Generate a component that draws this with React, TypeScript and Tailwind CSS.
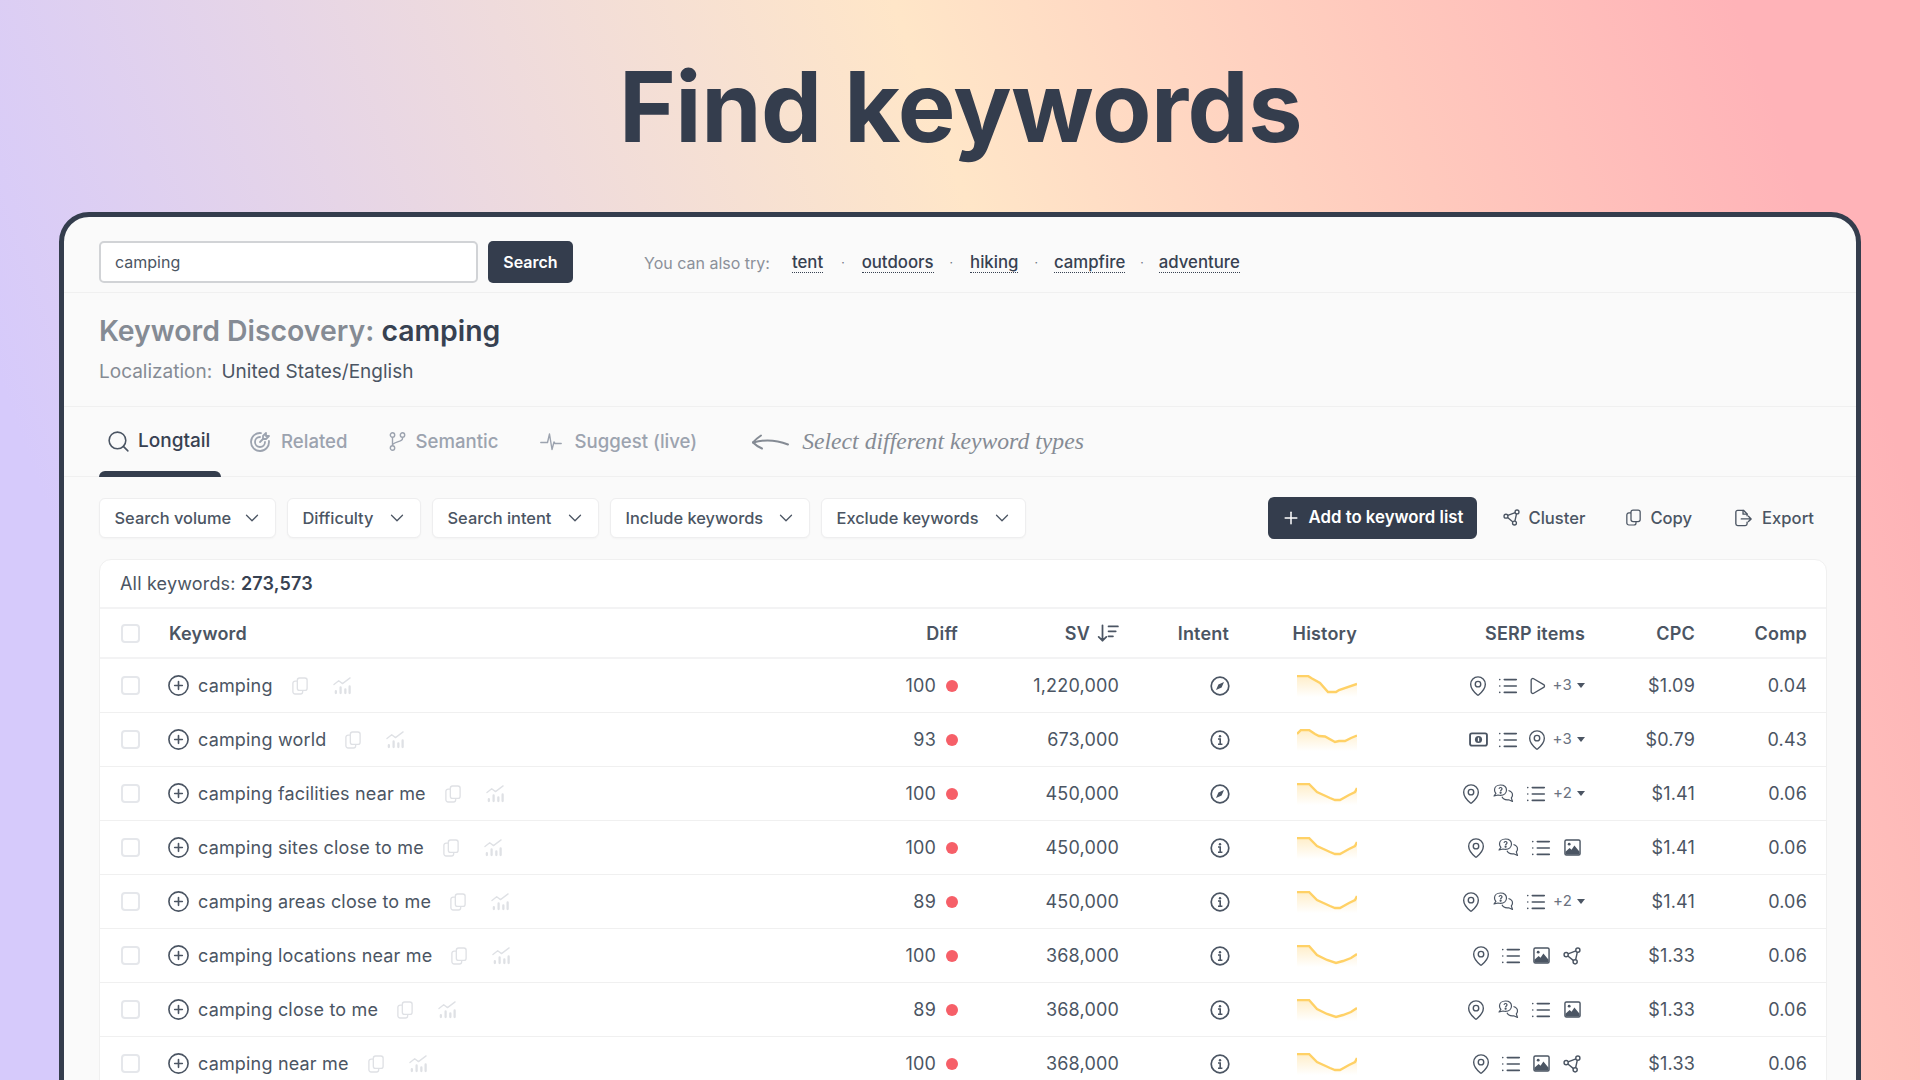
import React from 'react';
import { ChevronDown, CirclePlus, List, MapPin, Play, Plus, Search } from 'lucide-react';

type Serp = 'pin' | 'list' | 'play' | 'cash' | 'ask' | 'image' | 'share';

interface Row {
  keyword: string;
  diff: number;
  sv: string;
  intent: 'nav' | 'info';
  line: string;
  serp: Serp[];
  more?: string;
  cpc: string;
  comp: string;
}

const curve = '0,1 12,1 20,9 33,15 38,17 43,17 52,12 58,9 60,5';

const rows: Row[] = [
  { keyword: 'camping', diff: 100, sv: '1,220,000', intent: 'nav', line: '0,1 11,1 15,3.5 23,8 31,17 39,17 42,15 60,9', serp: ['pin', 'list', 'play'], more: '+3', cpc: '$1.09', comp: '0.04' },
  { keyword: 'camping world', diff: 93, sv: '673,000', intent: 'info', line: '0,5 4,1 12,1 18,5 22,7 28,7.5 38,13 42,12 48,12 54,9 60,6.5', serp: ['cash', 'list', 'pin'], more: '+3', cpc: '$0.79', comp: '0.43' },
  { keyword: 'camping facilities near me', diff: 100, sv: '450,000', intent: 'nav', line: curve, serp: ['pin', 'ask', 'list'], more: '+2', cpc: '$1.41', comp: '0.06' },
  { keyword: 'camping sites close to me', diff: 100, sv: '450,000', intent: 'info', line: curve, serp: ['pin', 'ask', 'list', 'image'], cpc: '$1.41', comp: '0.06' },
  { keyword: 'camping areas close to me', diff: 89, sv: '450,000', intent: 'info', line: curve, serp: ['pin', 'ask', 'list'], more: '+2', cpc: '$1.41', comp: '0.06' },
  { keyword: 'camping locations near me', diff: 100, sv: '368,000', intent: 'info', line: '0,1 12,1 20,10 30,15 39,18 46,16 54,13 60,9', serp: ['pin', 'list', 'image', 'share'], cpc: '$1.33', comp: '0.06' },
  { keyword: 'camping close to me', diff: 89, sv: '368,000', intent: 'info', line: '0,1 12,1 20,10 30,15 39,18 46,16 54,13 60,9', serp: ['pin', 'ask', 'list', 'image'], cpc: '$1.33', comp: '0.06' },
  { keyword: 'camping near me', diff: 100, sv: '368,000', intent: 'info', line: curve, serp: ['pin', 'list', 'image', 'share'], cpc: '$1.33', comp: '0.06' },
];

const gridCols = 'grid grid-cols-[69px_689px_100px_161px_110px_128px_228px_110px_112px] pr-[19px] items-center';

const CopyIcon = ({ className }: { className?: string }) => (
  <svg viewBox="0 0 18 20" fill="none" stroke="currentColor" strokeWidth="1.5" className={className}>
    <rect x="6" y="1" width="11" height="14" rx="2.5" />
    <path d="M6 4.5H3.5A2.5 2.5 0 0 0 1 7v9.5A2.5 2.5 0 0 0 3.5 19h6a2.5 2.5 0 0 0 2.5-2.5V15" />
  </svg>
);

const ShareIcon = ({ className }: { className?: string }) => (
  <svg viewBox="0 0 20 20" fill="none" stroke="currentColor" strokeWidth="1.6" className={className}>
    <circle cx="3.5" cy="8.5" r="2.3" />
    <circle cx="16.5" cy="3.5" r="2.3" />
    <circle cx="13.5" cy="16.5" r="2.3" />
    <path d="M5.7 7.6l8.6-3.3M5.4 10l6.3 5.2M15.9 5.7l-1.9 8.6" />
  </svg>
);

const ExportIcon = ({ className }: { className?: string }) => (
  <svg viewBox="0 0 20 20" fill="none" stroke="currentColor" strokeWidth="1.5" strokeLinecap="round" strokeLinejoin="round" className={className}>
    <path d="M14 7.5V5.5L10 1.5H3.5A2 2 0 0 0 1.5 3.5v13a2 2 0 0 0 2 2H12a2 2 0 0 0 2-2V14.5" />
    <path d="M9.5 1.5v4.2h4.5" />
    <path d="M7.5 11h11M15.5 8l3 3-3 3" />
  </svg>
);

const RelatedIcon = () => (
  <svg viewBox="0 0 24 24" fill="none" stroke="currentColor" strokeWidth="1.8" strokeLinecap="round" strokeLinejoin="round" className="w-[24px] h-[24px] -ml-[3px]">
    <path d="M12 7a5 5 0 1 0 5 5" />
    <path d="M13 3.055a9 9 0 1 0 7.941 7.945" />
    <path d="M15 6v3h3l3-3h-3v-3z" />
    <path d="M15 9l-3 3" />
  </svg>
);

const BranchIcon = () => (
  <svg viewBox="0 0 17 19" fill="none" stroke="currentColor" strokeWidth="1.4" className="w-[17px] h-[19px]">
    <circle cx="3.5" cy="3" r="2.2" />
    <circle cx="3.5" cy="16" r="2.2" />
    <circle cx="13.5" cy="3" r="2.2" />
    <path d="M3.500 5.200v8.600M13.500 5.200v1.300c0 3.500-6.500 2.500-10 6" />
  </svg>
);

const PulseIcon = () => (
  <svg viewBox="0 0 22 20" fill="none" stroke="currentColor" strokeWidth="1.4" strokeLinejoin="round" strokeLinecap="round" className="w-[22px] h-[20px]">
    <path d="M0.8 10.5H7.5L9.5 2 12 17.5l2-7.5 1 1.5H21.2" />
  </svg>
);

const HandArrow = () => (
  <svg viewBox="0 0 38 16" fill="none" stroke="currentColor" strokeWidth="2" strokeLinecap="round" strokeLinejoin="round" className="w-[38px] h-[16px]">
    <path d="M37 10.5C27 6.5 14 5 2 8.5" />
    <path d="M10 1.5C7 3.5 4.5 5.5 2 8.5 4.5 11 7.5 13 11 14.5" />
  </svg>
);

const TrendIcon = () => (
  <svg viewBox="0 0 20 20" fill="none" stroke="currentColor" strokeWidth="1.4" strokeLinecap="round" strokeLinejoin="round" className="w-[19px] h-[19px] text-[#dfe1e5]">
    <path d="M1 9l5-4 4 3 8-6" />
    <path strokeWidth="2.4" d="M3 16v2M8 12v6M13 14v4M17.5 11v7" />
  </svg>
);

const CompassIcon = () => (
  <svg viewBox="0 0 20 20" fill="none" className="w-[20px] h-[20px] text-[#4b5563]">
    <circle cx="10" cy="10" r="8.8" stroke="currentColor" strokeWidth="1.7" />
    <path d="M14 6l-2.4 5.6L6 14l2.4-5.6z" fill="currentColor" />
  </svg>
);

const InfoIcon = () => (
  <svg viewBox="0 0 20 20" fill="none" className="w-[20px] h-[20px] text-[#4b5563]">
    <circle cx="10" cy="10" r="8.8" stroke="currentColor" strokeWidth="1.7" />
    <circle cx="10" cy="6.2" r="1.2" fill="currentColor" />
    <path d="M8 9h2.2v5M8 14.2h4.4" stroke="currentColor" strokeWidth="1.6" />
  </svg>
);

const AskIcon = () => (
  <svg viewBox="0 0 21 19" fill="none" stroke="currentColor" strokeWidth="1.2" strokeLinejoin="round" className="w-[21px] h-[19px]">
    <path d="M7.5 1C4 1 1.5 3.2 1.5 6c0 1.3.5 2.4 1.4 3.3L1 12l4-1c.8.3 1.6.4 2.5.4 3.500 0 6-2.300 6-5.400S11 1 7.500 1z" />
    <path d="M15.500 6.500c2.300.7 4 2.400 4 4.500 0 1.100-.5 2.100-1.200 2.900l1.200 3.600-3.800-1.700c-2.900.4-5.700-.8-6.700-3" />
    <path d="M6 4.800c.2-.9.900-1.400 1.700-1.300.9.100 1.400.800 1.300 1.500-.1.900-1.300 1.100-1.400 2.100" />
    <circle cx="7.600" cy="8.700" r=".5" fill="currentColor" />
  </svg>
);

const CashIcon = () => (
  <svg viewBox="0 0 20 16" className="w-[19px] h-[15px] shrink-0">
    <rect x="1" y="1.500" width="18" height="13" rx="2" fill="none" stroke="currentColor" strokeWidth="2" />
    <circle cx="10" cy="8" r="3.800" fill="currentColor" />
    <rect x="9.300" y="6" width="1.400" height="4" fill="#fff" />
  </svg>
);

const ImageIcon = () => (
  <svg viewBox="0 0 18 18" className="w-[17px] h-[17px]">
    <rect x="1" y="1" width="16" height="16" rx="1.500" fill="none" stroke="currentColor" strokeWidth="1.500" />
    <circle cx="5.500" cy="5.500" r="1.500" fill="currentColor" />
    <path d="M1.500 16.500v-3L6 9.500l2 2 3-4.500 5.500 6.500v3z" fill="currentColor" />
  </svg>
);

const SerpIcon = ({ name }: { name: Serp }) => {
  if (name === 'ask') return <AskIcon />;
  return (
    <span className="w-[18px] h-[20px] flex items-center justify-center">
      {name === 'pin' && <MapPin className="w-[22px] h-[22px] shrink-0" strokeWidth={1.5} />}
      {name === 'list' && <List className="w-[22px] h-[22px] shrink-0" strokeWidth={1.8} />}
      {name === 'play' && <Play className="w-[20px] h-[20px] shrink-0" strokeWidth={1.6} />}
      {name === 'cash' && <CashIcon />}
      {name === 'image' && <ImageIcon />}
      {name === 'share' && <ShareIcon className="w-[18px] h-[18px]" />}
    </span>
  );
};

const Sparkline = ({ id, line }: { id: number; line: string }) => (
  <svg viewBox="0 0 60 22" className="w-[60px] h-[22px]">
    <defs>
      <linearGradient id={`spark${id}`} x1="0" y1="0" x2="0" y2="1">
        <stop offset="0" stopColor="#ffeec9" />
        <stop offset="1" stopColor="#ffffff" />
      </linearGradient>
    </defs>
    <polygon points={`${line} 60,22 0,22`} fill={`url(#spark${id})`} />
    <polyline points={line} fill="none" stroke="#ffd166" strokeWidth="2.4" />
  </svg>
);

const Checkbox = () => <div className="ml-[21px] w-[19px] h-[19px] rounded-[4px] border-2 border-[#e5e7eb] bg-white" />;

const FilterButton = ({ label, width }: { label: string; width: string }) => (
  <button className={`${width} h-[40px] flex items-center justify-between pl-[14.5px] pr-[12px] bg-white border border-[#eeeeef] rounded-[6px] shadow-[0_1px_2px_rgba(0,0,0,0.03)] text-[16.4px] font-medium text-[#4b5563]`}>
    {label}
    <ChevronDown className="w-[22px] h-[22px]" strokeWidth={1.4} />
  </button>
);

const Suggestion = ({ children }: { children: React.ReactNode }) => (
  <a className="text-[16.8px] font-medium text-[#374151] border-b border-dotted border-[#374151] leading-[19px]">{children}</a>
);

const Dot = ({ className }: { className: string }) => <span className={`text-[#6b7280] text-[12px] ${className}`}>·</span>;

export default function App() {
  return (
    <div className="w-[1920px] h-[1080px] overflow-hidden font-[Inter,sans-serif] bg-[linear-gradient(70deg,#d6cafb_11%,#ffe6c8_55.6%,#ffc9bd_76%,#ffb3b8_92%)]">
      <div className="h-[212px] flex items-center justify-center">
        <h1 className="text-[97px] font-bold text-[#343d4d] tracking-[-0.005em] leading-none pl-[1px]">Find keywords</h1>
      </div>

      <div className="ml-[59px] w-[1802px] rounded-[30px] border-[5px] border-[#343d4d] bg-[#fafafa]">
        <div className="h-[76px] pt-[24px] pl-[35px] flex items-start border-b border-[#f0f0f0]">
          <input
            readOnly
            value="camping"
            className="w-[379px] h-[42px] px-[14px] bg-white border-2 border-[#d1d3d6] rounded-[5px] text-[16px] text-[#4b5563] outline-none"
          />
          <button className="ml-[10px] w-[85px] h-[42px] bg-[#343d4d] rounded-[5px] text-white text-[16px] font-semibold">Search</button>
          <div className="ml-[71px] h-[42px] pt-[1px] flex items-center">
            <span className="text-[16px] text-[#8b9099] mr-[22px]">You can also try:</span>
            <Suggestion>tent</Suggestion>
            <Dot className="ml-[18px] mr-[17px]" />
            <Suggestion>outdoors</Suggestion>
            <Dot className="ml-[16px] mr-[17px]" />
            <Suggestion>hiking</Suggestion>
            <Dot className="mx-[16px]" />
            <Suggestion>campfire</Suggestion>
            <Dot className="ml-[15px] mr-[15px]" />
            <Suggestion>adventure</Suggestion>
          </div>
        </div>

        <div className="h-[114px] pl-[35px] pt-[20px] border-b border-[#f0f0f0]">
          <h2 className="text-[28.4px] leading-[36px] font-semibold text-[#858b94]">
            Keyword Discovery: <span className="text-[#374151]">camping</span>
          </h2>
          <p className="mt-[11px] text-[19px] leading-[24px] text-[#858b94]">
            Localization: <span className="ml-[4px] text-[#4b5563]">United States/English</span>
          </p>
        </div>

        <div className="h-[70px] pl-[35px] flex items-stretch border-b border-[#f0f0f0] text-[18.6px] font-medium text-[#9ca3af]">
          <div className="w-[122px] relative flex items-center gap-[7px] pl-[7px] text-[19px] text-[#374151]">
            <Search className="w-[25px] h-[25px] text-[#4b5563]" strokeWidth={1.5} />
            Longtail
            <div className="absolute left-0 right-0 -bottom-px h-[6px] rounded-t-[6px] bg-[#343d4d]" />
          </div>
          <div className="ml-[30px] flex items-center gap-[9px]"><RelatedIcon />Related</div>
          <div className="ml-[41px] flex items-center gap-[10px]"><BranchIcon />Semantic</div>
          <div className="ml-[42px] flex items-center gap-[12px]"><PulseIcon />Suggest (live)</div>
          <div className="ml-[54px] flex items-center gap-[13px] text-[#858b94]">
            <HandArrow />
            <span className="font-['Liberation_Serif',serif] italic font-normal text-[23.7px]">Select different keyword types</span>
          </div>
        </div>

        <div className="pl-[35px] pr-[29px] pt-[21px] pb-[20px]">
          <div className="h-[40px] flex items-center gap-[11px]">
            <FilterButton label="Search volume" width="w-[177px]" />
            <FilterButton label="Difficulty" width="w-[134px]" />
            <FilterButton label="Search intent" width="w-[167px]" />
            <FilterButton label="Include keywords" width="w-[200px]" />
            <FilterButton label="Exclude keywords" width="w-[205px]" />
            <div className="ml-auto flex items-center text-[16.6px] font-medium text-[#4b5563] pr-[13px]">
              <button className="w-[209px] h-[42px] flex items-center justify-center gap-[8px] rounded-[6px] bg-[#343d4d] text-white text-[16.8px] font-semibold">
                <Plus className="w-[20px] h-[20px]" strokeWidth={1.8} />
                Add to keyword list
              </button>
              <span className="ml-[26px] flex items-center gap-[9px]"><ShareIcon className="w-[17px] h-[17px]" />Cluster</span>
              <span className="ml-[41px] flex items-center gap-[9px]"><CopyIcon className="w-[15px] h-[17px]" />Copy</span>
              <span className="ml-[42px] flex items-center gap-[9px]"><ExportIcon className="w-[19px] h-[18px]" />Export</span>
            </div>
          </div>

          <div className="mt-[21px] rounded-t-[12px] border border-[#f0f0f0] bg-white text-[18px] tracking-[0.01em] text-[#4b5563]">
            <div className="h-[49px] pl-[20px] flex items-center border-b-2 border-[#f3f3f4]">
              All keywords:&nbsp;<span className="font-semibold text-[#374151]">273,573</span>
            </div>
            <div className={`${gridCols} h-[50px] border-b-2 border-[#f3f3f4] font-semibold text-[#4b5563]`}>
              <Checkbox />
              <div>Keyword</div>
              <div className="text-right">Diff</div>
              <div className="flex items-center justify-end gap-[7px]">
                SV
                <svg viewBox="0 0 20 20" fill="none" stroke="currentColor" strokeWidth="1.6" strokeLinecap="round" strokeLinejoin="round" className="w-[22px] h-[22px]">
                  <path d="M5 3v14M1.500 13.500L5 17l3.500-3.500M10.500 4H19M10.500 8.500H17M10.500 13H14.500" />
                </svg>
              </div>
              <div className="text-right">Intent</div>
              <div className="text-right">History</div>
              <div className="text-right">SERP items</div>
              <div className="text-right">CPC</div>
              <div className="text-right">Comp</div>
            </div>
            {rows.map((row, i) => (
              <div key={row.keyword} className={`${gridCols} h-[54px] border-b border-[#f0f0f0]`}>
                <Checkbox />
                <div className="flex items-center">
                  <CirclePlus className="w-[23px] h-[23px] -ml-[2px] mr-[8px] text-[#4b5563]" strokeWidth={1.7} />
                  {row.keyword}
                  <CopyIcon className="ml-[19px] w-[16px] h-[18px] text-[#dfe1e5]" />
                  <span className="ml-[25px]"><TrendIcon /></span>
                </div>
                <div className="flex items-center justify-end gap-[10px]">
                  {row.diff}
                  <span className="w-[12px] h-[12px] rounded-full bg-[#f65f68]" />
                </div>
                <div className="text-right">{row.sv}</div>
                <div className="flex justify-end mr-[-1px]">{row.intent === 'nav' ? <CompassIcon /> : <InfoIcon />}</div>
                <div className="flex justify-end"><Sparkline id={i} line={row.line} /></div>
                <div className={`flex items-center justify-end text-[#4b5563] ${row.serp.includes('ask') ? 'gap-[13px]' : row.more ? 'gap-[11.5px]' : 'gap-[12.5px]'} ${row.more ? '' : 'pr-[4px]'}`}>
                  {row.serp.map((s, n) => <SerpIcon key={n} name={s} />)}
                  {row.more && (
                    <span className="flex items-center gap-[5px] ml-[-5px] text-[15px] text-[#6b7280]">
                      {row.more}
                      <span className="w-0 h-0 border-x-[4px] border-x-transparent border-t-[5px] border-t-[#4b5563]" />
                    </span>
                  )}
                </div>
                <div className="text-right">{row.cpc}</div>
                <div className="text-right">{row.comp}</div>
              </div>
            ))}
          </div>
        </div>
      </div>
    </div>
  );
}
